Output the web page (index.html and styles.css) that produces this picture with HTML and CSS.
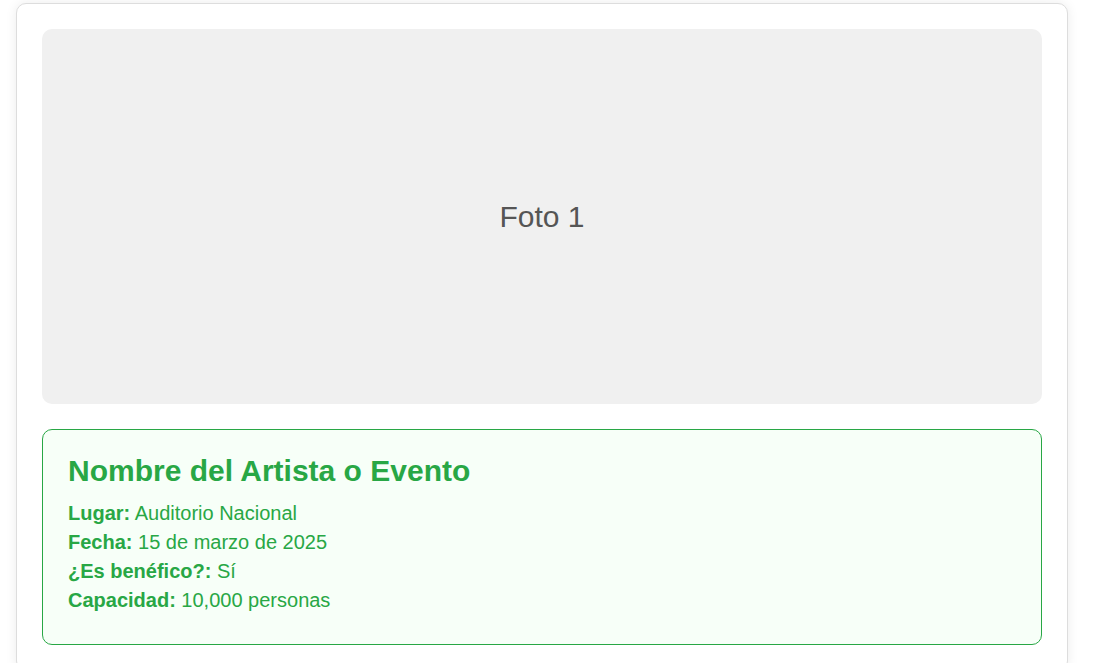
FILE: index.html
```html
<!DOCTYPE html>
<html lang="es">
<head>
<meta charset="utf-8">
<title>Evento</title>
<link rel="stylesheet" href="styles.css">
</head>
<body>
<div class="card">
  <div class="photo">Foto 1</div>
  <div class="info">
    <h2 class="title">Nombre del Artista o Evento</h2>
    <div class="details">
      <p><strong>Lugar:</strong> Auditorio Nacional</p>
      <p><strong>Fecha:</strong> 15 de marzo de 2025</p>
      <p><strong>¿Es benéfico?:</strong> Sí</p>
      <p><strong>Capacidad:</strong> 10,000 personas</p>
    </div>
  </div>
</div>
</body>
</html>
```

FILE: styles.css
```css
html, body {
  margin: 0;
  padding: 0;
  background: #ffffff;
  overflow: hidden;
}
body {
  padding: 3px 0 0 16px;
  font-family: "Liberation Sans", Arial, sans-serif;
}
.card {
  width: 1000px;
  padding: 25px;
  border: 1px solid #dddddd;
  border-radius: 10px;
  box-shadow: 0 0 12px rgba(0, 0, 0, 0.08);
  background: #ffffff;
  display: flex;
  flex-direction: column;
  gap: 25px;
}
.photo {
  height: 375px;
  background: #f0f0f0;
  border-radius: 10px;
  display: flex;
  align-items: center;
  justify-content: center;
  font-size: 30px;
  color: #555555;
}
.info {
  border: 1px solid #28a745;
  border-radius: 10px;
  background: #f7fff8;
  padding: 25px 25px 29px;
  color: #28a745;
}
.title {
  margin: 0 0 12px;
  font-size: 30px;
  line-height: 32px;
  font-weight: bold;
}
.details p {
  margin: 0;
  font-size: 20px;
  line-height: 29px;
}
```
